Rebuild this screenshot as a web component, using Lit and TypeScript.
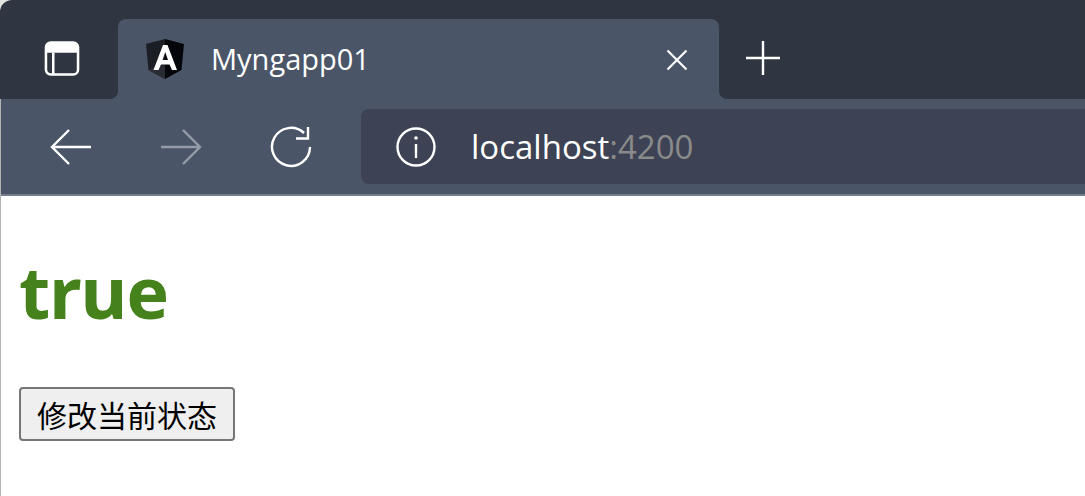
import { LitElement, html, css } from "lit";
import { customElement } from "lit/decorators.js";

@customElement("app-root")
export class AppRoot extends LitElement {
  static styles = css`
    :host { display: block; width: 1085px; height: 496px; background: #fff; overflow: hidden; font-family: "Open Sans", "Noto Sans", sans-serif; }
    .window { height: 496px; border-left: 1px solid #b4b4b4; box-sizing: border-box; display: flex; flex-direction: column; }
    .strip-wrap { background: #e4e4e4; margin-left: -1px; }
    .strip { height: 99px; background: #2f3541; border-top-left-radius: 12px; display: flex; align-items: flex-end; box-sizing: border-box; padding-left: 1px; }
    .side { width: 117px; height: 80px; display: flex; align-items: center; justify-content: center; }
    .side svg { margin-left: 5px; margin-top: -2px; }
    .tab { position: relative; width: 601px; height: 80px; background: #4a5568; border-radius: 8px 8px 0 0; display: flex; align-items: center; box-sizing: border-box; padding-left: 27px; color: #fff; }
    .tab::before, .tab::after { content: ""; position: absolute; bottom: 0; width: 8px; height: 8px; }
    .tab::before { left: -8px; background: radial-gradient(circle at 0 0, transparent 7.5px, #4a5568 8.5px); }
    .tab::after { right: -8px; background: radial-gradient(circle at 100% 0, transparent 7.5px, #4a5568 8.5px); }
    .tab-title { margin-left: 26px; font-size: 29px; line-height: 80px; margin-top: -1px; }
    .logo { display: block; }
    .close { margin-left: auto; margin-right: 31px; margin-top: 2px; display: block; }
    .plus { margin-left: 26px; margin-bottom: 23px; display: block; }
    .toolbar { background: #4a5568; border-bottom: 2px solid #747b8b; box-sizing: border-box; height: 97px; display: flex; align-items: flex-start; }
    .nav { display: flex; align-items: center; height: 95px; padding-left: 49px; box-sizing: border-box; }
    .nav svg { display: block; }
    .fwd { margin-left: 68px; }
    .reload { margin-left: 68px; }
    .address { margin-left: 49px; margin-top: 10px; height: 75px; flex: 1; background: #3d4354; border-radius: 8px 0 0 8px; display: flex; align-items: center; padding-left: 35px; font-size: 33px; color: #fff; }
    .url { margin-left: 35px; line-height: 75px; }
    .port { color: #8a8a8a; }
    .page { flex: 1; padding: 0 0 0 18px; }
    h1 { margin: 0; padding-top: 46px; font-size: 72px; line-height: 98px; font-weight: 700; color: #45821c; font-family: "Noto Sans", "Open Sans", sans-serif; letter-spacing: -1px; }
    button { display: block; margin-top: 47px; width: 216px; height: 54px; box-sizing: border-box; padding: 0; background: #efefef; border: 2px solid #767676; border-radius: 4px; color: #000; font-size: 30px; font-family: "Noto Sans CJK SC", sans-serif; line-height: 1; }
  `;

  render() {
    return html`
      <div class="window">
        <div class="strip-wrap">
          <div class="strip">
            <div class="side">
              <svg width="36" height="35" viewBox="0 0 36 36" fill="none" stroke="#fff">
                <rect x="1.5" y="1.5" width="33" height="33" rx="5" stroke-width="2.6"></rect>
                <path d="M2 6 a4 4 0 0 1 4 -4 h24 a4 4 0 0 1 4 4 v6 H2 Z" fill="#fff" stroke="none"></path>
                <path d="M9 12v22" stroke-width="2.6"></path>
              </svg>
            </div>
            <div class="tab">
              <svg class="logo" width="40" height="40" viewBox="0 0 40 40">
                <path d="M20 0 L1 5 L3.5 31 L20 40 Z" fill="#1c1e26"></path>
                <path d="M20 0 L39 5 L36.5 31 L20 40 Z" fill="#05060b"></path>
                <path d="M20 27 H10 L3.5 31 L20 40 Z" fill="#2a2c35"></path>
                <path d="M18 6 L8.5 31 H13.5 L16 25.5 H24.5 L27 31 H32 L22.5 6 Z M20.2 13 L23 21 H17.5 Z" fill="#fff" fill-rule="evenodd"></path>
              </svg>
              <span class="tab-title">Myngapp01</span>
              <svg class="close" width="22" height="22" viewBox="0 0 22 22" stroke="#fff" stroke-width="2.2" fill="none">
                <path d="M1.5 1.5 L20.5 20.5 M20.5 1.5 L1.5 20.5"></path>
              </svg>
            </div>
            <svg class="plus" width="36" height="36" viewBox="0 0 36 36" stroke="#fff" stroke-width="2.4" fill="none">
              <path d="M18 1 V35 M1 18 H35"></path>
            </svg>
          </div>
        </div>
        <div class="toolbar">
          <div class="nav">
            <svg width="42" height="36" viewBox="0 0 42 36" fill="none" stroke="#fff" stroke-width="2.4">
              <path d="M41 18 H2 M19 1 L2 18 L19 35"></path>
            </svg>
            <svg class="fwd" width="42" height="36" viewBox="0 0 42 36" fill="none" stroke="#fff" stroke-opacity="0.42" stroke-width="2.4">
              <path d="M1 18 H40 M23 1 L40 18 L23 35"></path>
            </svg>
            <svg class="reload" width="42" height="42" viewBox="0 0 42 42" fill="none" stroke="#fff" stroke-width="2.4">
              <path d="M40 21 A19 19 0 1 1 34 7"></path>
              <path d="M38 1 V12.5 H26"></path>
            </svg>
          </div>
          <div class="address">
            <svg width="40" height="40" viewBox="0 0 40 40" fill="none" stroke="#fff" stroke-width="2.4">
              <circle cx="20" cy="20" r="18.5"></circle>
              <path d="M20 17 V31"></path>
              <circle cx="20" cy="11" r="1.8" fill="#fff" stroke="none"></circle>
            </svg>
            <span class="url">localhost<span class="port">:4200</span></span>
          </div>
        </div>
        <div class="page">
          <h1>true</h1>
          <button>修改当前状态</button>
        </div>
      </div>
    `;
  }
}
